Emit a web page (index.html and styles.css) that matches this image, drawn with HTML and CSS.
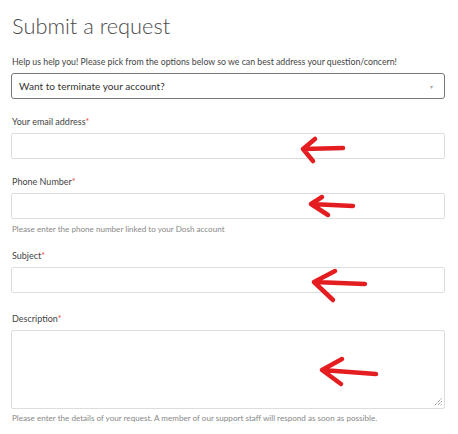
FILE: index.html
```html
<!DOCTYPE html>
<html>
<head>
<meta charset="utf-8">
<link rel="stylesheet" href="styles.css">
</head>
<body>
<div class="page">
  <h1 class="title">Submit a request</h1>
  <form class="form">
    <div class="field field-first">
      <label class="intro">Help us help you! Please pick from the options below so we can best address your question/concern!</label>
      <div class="select">
        <span>Want to terminate your account?</span>
        <span class="caret">&#9662;</span>
      </div>
    </div>
    <div class="field">
      <label class="label">Your email address<span class="req">*</span></label>
      <div class="input"></div>
    </div>
    <div class="field">
      <label class="label">Phone Number<span class="req">*</span></label>
      <div class="input"></div>
      <p class="hint">Please enter the phone number linked to your Dosh account</p>
    </div>
    <div class="field field-after-hint">
      <label class="label">Subject<span class="req">*</span></label>
      <div class="input"></div>
    </div>
    <div class="field field-desc">
      <label class="label">Description<span class="req">*</span></label>
      <div class="textarea">
        <svg class="grip" width="9" height="9" viewBox="0 0 9 9"><path d="M8.5 1.5 L1.5 8.5 M8.5 4.5 L4.5 8.5 M8.5 7.5 L7.5 8.5" stroke="#666" stroke-width="1" stroke-dasharray="1 1" fill="none"/></svg>
      </div>
      <p class="hint hint-desc">Please enter the details of your request. A member of our support staff will respond as soon as possible.</p>
    </div>
  </form>
  <svg class="arrows" width="458" height="434" viewBox="0 0 458 434">
    <g stroke="#e41e20" stroke-width="4.5" stroke-linecap="round" stroke-linejoin="round" fill="none">
      <path d="M343 148 L303 149 M315 139 L303 149 L313 161"/>
      <path d="M353 206 L311 204 M322 197 L311 204 L328 215"/>
      <path d="M365 284 L314 282 M335 271 L314 282 L333 300"/>
      <path d="M376 374 L322 370 M342 359 L322 370 L341 384"/>
    </g>
  </svg>
</div>
</body>
</html>
```
FILE: styles.css
```css
* { box-sizing: border-box; }
html, body { margin: 0; padding: 0; background: #fff; }
body { font-family: Lato, "Open Sans", sans-serif; color: #333; }
.page { position: relative; width: 458px; height: 434px; padding: 0 13px 0 11px; overflow: hidden; }
.title { margin: 0; padding-top: 10px; padding-left: 1px; font-size: 21.8px; font-weight: 300; color: #4a4a4a; line-height: 32px; white-space: nowrap; }
.form { display: flex; flex-direction: column; margin-top: 14px; }
.field { display: flex; flex-direction: column; margin-top: 17px; }
.field-first { margin-top: 0; }
.field-after-hint { margin-top: 16px; }
.field-desc { margin-top: 20px; }
.intro, .label { font-size: 8.75px; line-height: 11px; padding-left: 1px; margin-bottom: 6px; color: #444; }
.label { font-size: 9px; }
.req { color: #e44; }
.select { height: 26px; border: 1px solid #777; border-radius: 3px; display: flex; align-items: center; justify-content: space-between; padding: 0 11px 0 7px; font-size: 10.1px; color: #333; }
.caret { font-size: 6px; color: #aaa; }
.input { height: 26px; border: 1px solid #ddd; border-radius: 2px; }
.textarea { position: relative; height: 79px; border: 1px solid #ddd; border-radius: 2px; }
.grip { position: absolute; right: 2px; bottom: 2px; }
.hint { margin: 5px 0 0; padding-left: 1px; font-size: 8.1px; line-height: 10px; color: #888; }
.hint-desc { margin-top: 4px; }
.arrows { position: absolute; left: 0; top: 0; pointer-events: none; }
```
